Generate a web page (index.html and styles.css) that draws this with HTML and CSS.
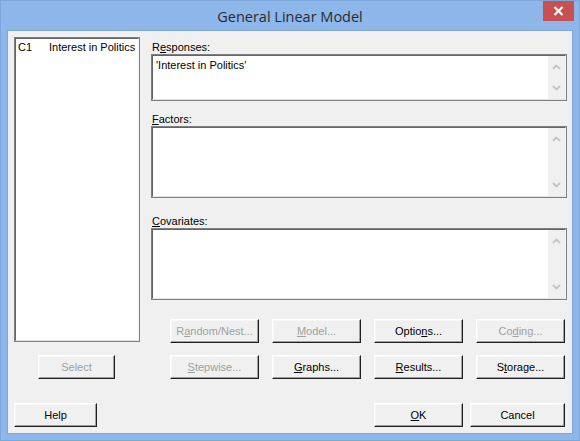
FILE: index.html
```html
<!DOCTYPE html>
<html>
<head>
<meta charset="utf-8">
<title>General Linear Model</title>
<link rel="stylesheet" href="styles.css">
</head>
<body>
<div class="window">
  <div class="titlebar">
    <span class="title">General Linear Model</span>
    <div class="close">
      <svg width="11" height="10" viewBox="0 0 11 10"><path d="M1.5 1 L9.5 9 M9.5 1 L1.5 9" stroke="#fff" stroke-width="2.2" fill="none"/></svg>
    </div>
  </div>
  <div class="client">
    <div class="top">
      <div class="left">
        <div class="listbox">
          <div class="list-in">
            <div class="item"><span class="col1">C1</span><span>Interest in Politics</span></div>
          </div>
        </div>
        <button class="btn btn-select" disabled>Select</button>
      </div>
      <div class="right">
        <div class="label label-resp">R<u>e</u>sponses:</div>
        <div class="field field-resp">
          <div class="field-in">
            <div class="field-text">'Interest in Politics'</div>
            <div class="scroll">
              <svg width="9" height="6" viewBox="0 0 9 6"><polyline points="1,5 4.5,1.5 8,5" fill="none" stroke="#c4c4c4" stroke-width="1.8"/></svg>
              <svg width="9" height="6" viewBox="0 0 9 6"><polyline points="1,1 4.5,4.5 8,1" fill="none" stroke="#c4c4c4" stroke-width="1.8"/></svg>
            </div>
          </div>
        </div>
        <div class="label label-fact"><u>F</u>actors:</div>
        <div class="field field-tall">
          <div class="field-in">
            <div class="field-text"></div>
            <div class="scroll">
              <svg width="9" height="6" viewBox="0 0 9 6"><polyline points="1,5 4.5,1.5 8,5" fill="none" stroke="#c4c4c4" stroke-width="1.8"/></svg>
              <svg width="9" height="6" viewBox="0 0 9 6"><polyline points="1,1 4.5,4.5 8,1" fill="none" stroke="#c4c4c4" stroke-width="1.8"/></svg>
            </div>
          </div>
        </div>
        <div class="label label-cov"><u>C</u>ovariates:</div>
        <div class="field field-tall">
          <div class="field-in">
            <div class="field-text"></div>
            <div class="scroll">
              <svg width="9" height="6" viewBox="0 0 9 6"><polyline points="1,5 4.5,1.5 8,5" fill="none" stroke="#c4c4c4" stroke-width="1.8"/></svg>
              <svg width="9" height="6" viewBox="0 0 9 6"><polyline points="1,1 4.5,4.5 8,1" fill="none" stroke="#c4c4c4" stroke-width="1.8"/></svg>
            </div>
          </div>
        </div>
        <div class="btn-grid">
          <button class="btn" disabled>R<u>a</u>ndom/Nest...</button>
          <button class="btn" disabled><u>M</u>odel...</button>
          <button class="btn">Optio<u>n</u>s...</button>
          <button class="btn" disabled>Co<u>d</u>ing...</button>
          <button class="btn" disabled><u>S</u>tepwise...</button>
          <button class="btn"><u>G</u>raphs...</button>
          <button class="btn"><u>R</u>esults...</button>
          <button class="btn">S<u>t</u>orage...</button>
        </div>
      </div>
    </div>
    <div class="bottom">
      <button class="btn btn-help">Help</button>
      <div class="spacer"></div>
      <button class="btn btn-ok"><u>O</u>K</button>
      <button class="btn btn-cancel">Cancel</button>
    </div>
  </div>
</div>
</body>
</html>
```
FILE: styles.css
```css
html, body {
  margin: 0;
  padding: 0;
}
body {
  width: 580px;
  height: 441px;
  overflow: hidden;
  font-family: "Liberation Sans", Arial, sans-serif;
  font-size: 11px;
}
.window {
  width: 580px;
  height: 441px;
  box-sizing: border-box;
  background: #8db6ea;
  border: 1px solid #7ea6da;
  padding: 0 6px 6px 6px;
  display: flex;
  flex-direction: column;
}
.titlebar {
  position: relative;
  height: 29px;
  display: flex;
  justify-content: center;
  align-items: center;
}
.title {
  font-family: "Open Sans", "Noto Sans", sans-serif;
  font-size: 14.5px;
  color: #2b2b2b;
  margin-top: 1px;
}
.close {
  position: absolute;
  top: 0;
  right: -1px;
  width: 31px;
  height: 20px;
  background: #c75050;
  display: flex;
  align-items: center;
  justify-content: center;
}
.client {
  flex: 1;
  background: #f0f0f0;
  border: 1px solid #80a6d8;
  padding: 6px 0 0 6px;
  display: flex;
  flex-direction: column;
}
.top {
  display: flex;
  height: 342px;
}
.left {
  width: 126px;
  display: flex;
  flex-direction: column;
}
.listbox, .field {
  border: 1px solid #7f7f7f;
  box-sizing: border-box;
}
.list-in, .field-in {
  height: 100%;
  box-sizing: border-box;
  border-style: solid;
  border-width: 1px;
  border-color: #646464 #f4f4f4 #e3e3e3 #646464;
  background: #fff;
}
.listbox {
  height: 305px;
}
.list-in {
  padding: 2px 2px;
}
.item {
  display: flex;
  line-height: 13px;
  color: #000;
  white-space: nowrap;
}
.col1 {
  width: 31px;
}
.right {
  margin-left: 11px;
  width: 416px;
  display: flex;
  flex-direction: column;
}
.label {
  line-height: 13px;
  height: 13px;
  padding-left: 1px;
  color: #000;
}
.label-resp { margin-top: 4px; }
.label-fact { margin-top: 12px; }
.label-cov { margin-top: 17px; }
u {
  text-decoration: underline;
  text-underline-offset: 1px;
}
.field-resp { height: 47px; }
.field-tall { height: 72px; }
.field-in {
  display: flex;
}
.field-text {
  flex: 1;
  padding: 3px 3px;
  line-height: 13px;
  color: #000;
  white-space: nowrap;
}
.scroll {
  width: 17px;
  background: #f0f0f0;
  display: flex;
  flex-direction: column;
  justify-content: space-between;
  align-items: center;
  padding: 8px 0 8px 0;
  box-sizing: border-box;
}
.scroll svg {
  display: block;
}
.btn {
  font-family: "Liberation Sans", Arial, sans-serif;
  font-size: 11px;
  color: #000;
  background: #f0f0f0;
  width: 89px;
  height: 24px;
  box-sizing: border-box;
  margin: 0;
  padding: 0;
  border-style: solid;
  border-width: 1px;
  border-color: #ffffff #1e1e1e #1e1e1e #ffffff;
  box-shadow: inset -1px -1px 0 #a0a0a0, inset 1px 1px 0 #f7f7f7;
  border-radius: 0;
  line-height: 20px;
  text-align: center;
}
.btn:disabled {
  color: #a0a0a0;
}
.btn-select {
  width: 77px;
  margin-top: 13px;
  margin-left: 24px;
}
.btn-grid {
  margin-top: 19px;
  margin-left: 19px;
  display: grid;
  grid-template-columns: repeat(4, 89px);
  column-gap: 13px;
  row-gap: 12px;
}
.bottom {
  margin-top: 24px;
  display: flex;
  padding-right: 7px;
}
.spacer {
  flex: 1;
}
.btn-help {
  width: 83px;
}
.btn-ok {
  width: 89px;
}
.btn-cancel {
  width: 95px;
  margin-left: 7px;
}
```
